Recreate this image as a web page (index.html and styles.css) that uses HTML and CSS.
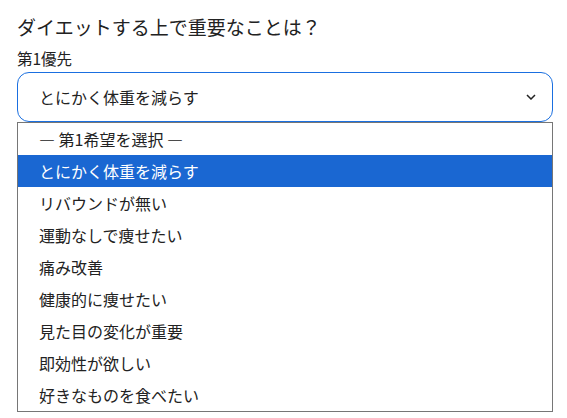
FILE: index.html
```html
<!DOCTYPE html>
<html lang="ja">
<head>
<meta charset="utf-8">
<link rel="stylesheet" href="styles.css">
</head>
<body>
<div class="page">
  <h1 class="title">ダイエットする上で重要なことは？</h1>
  <div class="label">第1優先</div>
  <div class="select">
    <span class="select-value">とにかく体重を減らす</span>
    <svg class="chevron" width="10" height="6" viewBox="0 0 10 6"><path d="M1 1 L5 5 L9 1" fill="none" stroke="#222" stroke-width="1.5"/></svg>
  </div>
  <ul class="listbox">
    <li class="option">— 第1希望を選択 —</li>
    <li class="option selected">とにかく体重を減らす</li>
    <li class="option">リバウンドが無い</li>
    <li class="option">運動なしで痩せたい</li>
    <li class="option">痛み改善</li>
    <li class="option">健康的に痩せたい</li>
    <li class="option">見た目の変化が重要</li>
    <li class="option">即効性が欲しい</li>
    <li class="option">好きなものを食べたい</li>
  </ul>
</div>
</body>
</html>
```
FILE: styles.css
```css
html, body {
  margin: 0;
  padding: 0;
  background: #fff;
}
.page {
  padding: 13px 14px 0 17px;
  font-family: "Noto Sans CJK JP", "Noto Sans", sans-serif;
  color: #222;
}
.title {
  margin: 0;
  font-size: 19px;
  font-weight: 400;
  line-height: 28px;
}
.label {
  margin-top: 5px;
  font-size: 15.5px;
  line-height: 24px;
}
.select {
  margin-top: 2px;
  box-sizing: border-box;
  width: 536px;
  height: 50px;
  border: 1px solid #1a6fe0;
  border-radius: 12px;
  display: flex;
  align-items: center;
  justify-content: space-between;
  padding: 0 16px 0 21px;
  font-size: 16px;
}
.chevron {
  display: block;
}
.listbox {
  list-style: none;
  margin: 0;
  padding: 0;
  box-sizing: border-box;
  width: 536px;
  border: 1px solid #767676;
  font-size: 16px;
}
.option {
  height: 32px;
  line-height: 32px;
  padding-left: 21px;
}
.option.selected {
  background: #1a67d2;
  color: #fff;
}
```
